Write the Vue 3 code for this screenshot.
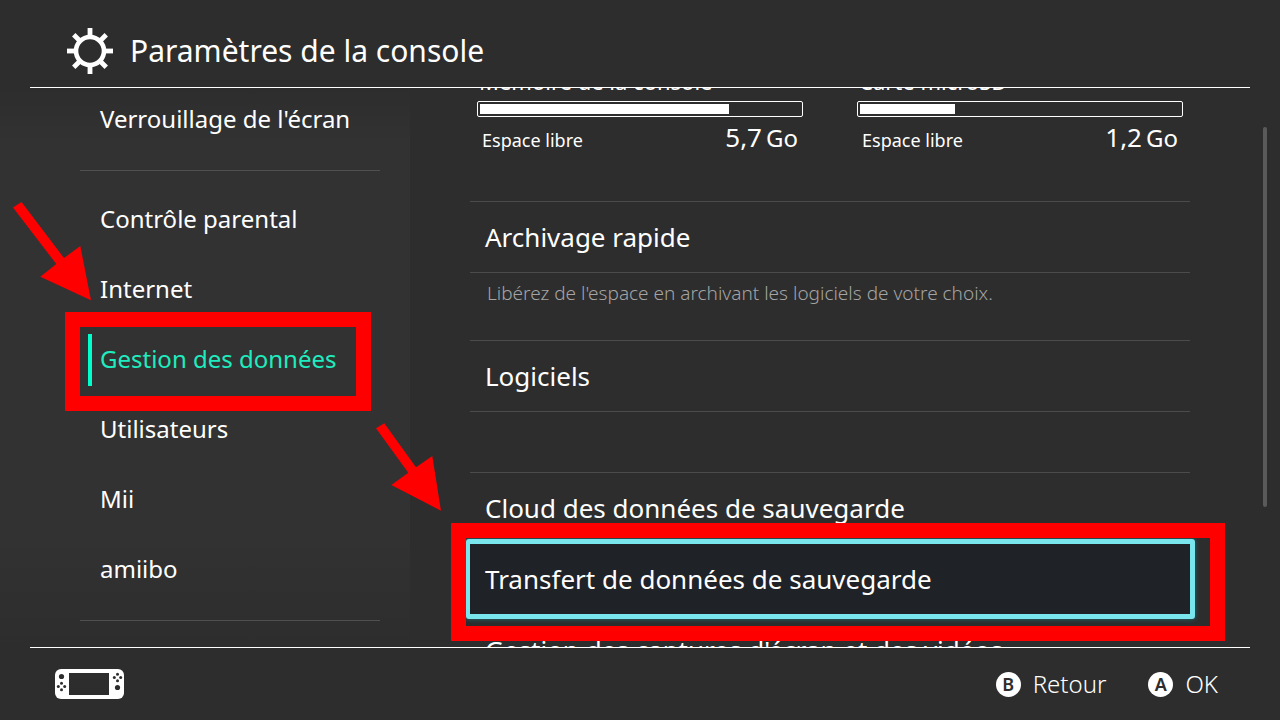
<script setup>
const navGroups = [
  [{ label: "Verrouillage de l'écran" }],
  [
    { label: 'Contrôle parental' },
    { label: 'Internet' },
    { label: 'Gestion des données', current: true },
    { label: 'Utilisateurs' },
    { label: 'Mii' },
    { label: 'amiibo' },
  ],
  [],
]

const storages = [
  { name: 'Mémoire de la console', free: '5,7', used: 77.8 },
  { name: 'Carte microSD', free: '1,2', used: 29.7 },
]

const sections = [
  {
    rows: [{ label: 'Archivage rapide' }],
    hint: "Libérez de l'espace en archivant les logiciels de votre choix.",
  },
  { rows: [{ label: 'Logiciels' }] },
  {
    rows: [
      { label: 'Cloud des données de sauvegarde' },
      { label: 'Transfert de données de sauvegarde', focused: true },
      { label: "Gestion des captures d'écran et des vidéos" },
    ],
  },
]
</script>

<template>
  <div class="screen">
    <header class="header">
      <svg class="gear" viewBox="0 0 48 48" aria-hidden="true">
        <circle cx="24" cy="24" r="14" fill="none" stroke="#fff" stroke-width="4.6" />
        <g fill="#fff">
          <rect v-for="n in 8" :key="n" x="21.6" y="1" width="4.8" height="8.5" :transform="`rotate(${n * 45} 24 24)`" />
        </g>
      </svg>
      <h1>Paramètres de la console</h1>
    </header>

    <main class="body">
      <nav class="sidebar">
        <ul v-for="(group, g) in navGroups" :key="g" class="nav-group">
          <li v-for="item in group" :key="item.label">
            <a href="#" class="nav-item" :class="{ current: item.current }">
              {{ item.label }}
              <template v-if="item.current">
                <span class="callout nav-callout"></span>
                <svg class="arrow nav-arrow" viewBox="0 0 78 99" aria-hidden="true">
                  <path d="M0 6.500L8.500 1L51 57L67.300 45L78 99.300L27.300 75.700L43.300 63Z" fill="#f00" />
                </svg>
              </template>
            </a>
          </li>
        </ul>
      </nav>

      <section class="content">
        <div class="storages">
          <div v-for="s in storages" :key="s.name" class="storage">
            <h2>{{ s.name }}</h2>
            <div class="gauge"><div class="gauge-fill" :style="{ width: s.used + '%' }"></div></div>
            <div class="free">
              <span>Espace libre</span>
              <span class="amount">{{ s.free }}<small>Go</small></span>
            </div>
          </div>
        </div>

        <div v-for="(section, i) in sections" :key="i" class="section">
          <div class="rows">
            <button v-for="row in section.rows" :key="row.label" type="button" class="row" :class="{ focused: row.focused }">
              <span class="row-label">{{ row.label }}</span>
              <template v-if="row.focused">
                <span class="callout row-callout"></span>
                <svg class="arrow row-arrow" viewBox="0 0 65 88" aria-hidden="true">
                  <path d="M0 5.300L8.300 0.300L40 44.300L56.300 33L65 87.700L15.300 62L32.300 49.700Z" fill="#f00" />
                </svg>
              </template>
            </button>
          </div>
          <p v-if="section.hint" class="hint">{{ section.hint }}</p>
        </div>
      </section>
      <div class="scrollbar"></div>
    </main>

    <footer class="footer">
      <svg class="console" viewBox="0 0 69 30" aria-hidden="true">
        <rect width="69" height="30" rx="6" fill="#fff" />
        <g fill="#2d2d2d">
          <rect x="14" y="4" width="40" height="22" />
          <circle cx="6.500" cy="7.500" r="2.600" />
          <circle cx="62.500" cy="18.500" r="2.600" />
          <circle cx="6.500" cy="14.300" r="1.500" />
          <circle cx="6.500" cy="20.700" r="1.500" />
          <circle cx="3.300" cy="17.500" r="1.500" />
          <circle cx="9.700" cy="17.500" r="1.500" />
          <circle cx="62.500" cy="5.300" r="1.500" />
          <circle cx="62.500" cy="11.700" r="1.500" />
          <circle cx="59.300" cy="8.500" r="1.500" />
          <circle cx="65.700" cy="8.500" r="1.500" />
        </g>
      </svg>
      <div class="actions">
        <button type="button" class="action"><span class="key">B</span>Retour</button>
        <button type="button" class="action"><span class="key">A</span>OK</button>
      </div>
    </footer>
  </div>
</template>

<style>
body {
  margin: 0;
  background: #2d2d2d;
}
</style>

<style scoped>
.screen {
  height: 100vh;
  display: flex;
  flex-direction: column;
  background: #2d2d2d;
  color: #fff;
  font-family: 'Noto Sans', 'Open Sans', sans-serif;
  font-weight: 400;
  overflow: hidden;
}
h1, h2, p, ul {
  margin: 0;
  padding: 0;
  font-weight: inherit;
}
ul {
  list-style: none;
}
button {
  border: 0;
  padding: 0;
  background: none;
  color: inherit;
  font: inherit;
  text-align: left;
}
.header {
  flex: none;
  display: flex;
  align-items: center;
  gap: 16px;
  height: 88px;
  margin: 0 30px;
  padding: 15px 36px 0;
  box-sizing: border-box;
  border-bottom: 1px solid #fff;
}
.gear {
  width: 48px;
  height: 48px;
}
h1 {
  font-size: 30px;
  line-height: 40px;
}
.body {
  position: relative;
  flex: 1;
  min-height: 0;
  display: flex;
  overflow: hidden;
}
.sidebar {
  flex: none;
  width: 300px;
  padding: 0 30px 0 80px;
  background: linear-gradient(#2d2d2d, #323232 10%, #323232 80%, #2d2d2d);
}
.nav-group:first-child {
  margin-top: -3px;
}
.nav-group + .nav-group {
  margin-top: 15px;
  padding-top: 14px;
  border-top: 1px solid #505050;
}
.nav-item {
  position: relative;
  display: flex;
  align-items: center;
  box-sizing: border-box;
  height: 70px;
  padding: 0 0 4px 20px;
  color: #fff;
  font-size: 24px;
  text-decoration: none;
  white-space: nowrap;
}
.current {
  z-index: 2;
  color: #1fecbe;
}
.current::before {
  content: '';
  position: absolute;
  left: 8px;
  top: 9px;
  width: 4px;
  height: 52px;
  background: #00ffcb;
}
.content {
  flex: 1;
  min-width: 0;
  margin: -23px 90px 0 60px;
}
.storages {
  display: flex;
  gap: 54px;
  height: 136px;
  padding: 0 7px;
}
.storage {
  flex: 1;
}
h2 {
  padding: 0 0 4px 2px;
  font-size: 22px;
  line-height: 32px;
}
.gauge {
  height: 10px;
  padding: 2px;
  border: 1px solid #fff;
  border-radius: 2px;
}
.gauge-fill {
  height: 10px;
  background: #fff;
}
.free {
  display: flex;
  justify-content: space-between;
  align-items: baseline;
  padding: 2px 5px;
  font-size: 18px;
  line-height: 36px;
}
.amount {
  font-size: 26px;
}
.amount small {
  margin-left: 4px;
  font-size: 24px;
}
.section {
  height: 132px;
}
.section:nth-child(2) {
  height: 139px;
}
.rows {
  border-top: 1px solid #4b4b4b;
}
.row {
  position: relative;
  display: flex;
  align-items: center;
  width: 100%;
  height: 71px;
  padding-left: 15px;
  border-bottom: 1px solid #4b4b4b;
  font-size: 26px;
}
.row-label {
  position: relative;
}
.focused {
  z-index: 2;
}
.focused::before {
  content: '';
  position: absolute;
  inset: -5px -5px -5px -4px;
  border: 5px solid #79e5ec;
  border-left-width: 4px;
  border-radius: 3px;
  background: #1f2227;
  box-shadow: 0 0 5px #1c7078;
}
.hint {
  padding-left: 17px;
  color: #a4a4a4;
  font-size: 19px;
  font-weight: 300;
  line-height: 40px;
}
.callout {
  position: absolute;
  border: 15px solid #f00;
}
.nav-callout {
  inset: -13px 9px -16px -15px;
}
.row-callout {
  inset: -21px -35px -27px -19px;
}
.arrow {
  position: absolute;
}
.nav-arrow {
  left: -67px;
  top: -124px;
  width: 78px;
  height: 99px;
  overflow: visible;
}
.row-arrow {
  left: -94px;
  top: -121px;
  width: 65px;
  height: 88px;
}
.scrollbar {
  position: absolute;
  right: 13px;
  top: 39px;
  width: 4px;
  height: 380px;
  border-radius: 2px;
  background: #5a5a5a;
}
.footer {
  position: relative;
  flex: none;
  display: flex;
  align-items: center;
  justify-content: space-between;
  height: 73px;
  margin: 0 30px;
  padding: 0 32px 0 25px;
  box-sizing: border-box;
  border-top: 1px solid #fff;
}
.console {
  width: 69px;
  height: 30px;
}
.actions {
  display: flex;
  gap: 42px;
}
.action {
  display: flex;
  align-items: center;
  gap: 12px;
  font-size: 24px;
  font-weight: 300;
  line-height: 32px;
}
.key {
  width: 25px;
  border-radius: 50%;
  background: #fff;
  color: #2d2d2d;
  font-size: 18px;
  font-weight: 600;
  line-height: 25px;
  text-align: center;
}
</style>
